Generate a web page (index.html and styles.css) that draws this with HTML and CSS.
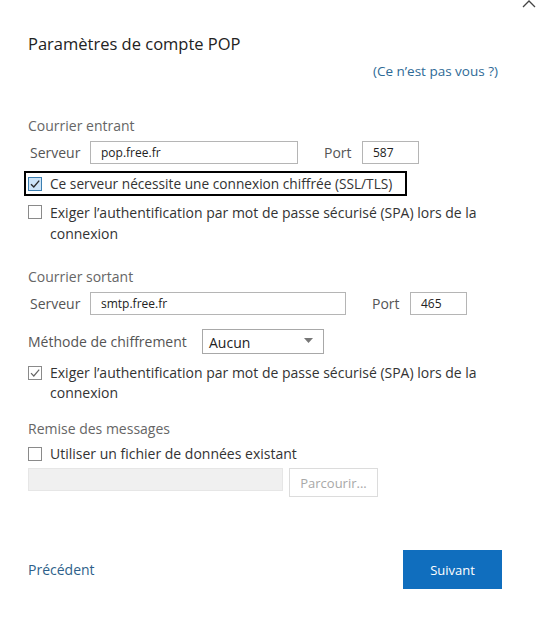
FILE: index.html
```html
<!DOCTYPE html>
<html lang="fr">
<head>
<meta charset="utf-8">
<link rel="stylesheet" href="styles.css">
</head>
<body>
<div class="dialog">
  <svg class="close" width="14" height="8" viewBox="0 0 14 8"><path d="M1 7 L7 1 L13 7" fill="none" stroke="#444" stroke-width="1.3"/></svg>
  <h1 class="title">Paramètres de compte POP</h1>
  <div class="notyou"><a>(Ce n’est pas vous ?)</a></div>

  <div class="section-label first">Courrier entrant</div>
  <div class="row server-row">
    <span class="lbl">Serveur</span>
    <span class="input in-srv1">pop.free.fr</span>
    <span class="lbl port-lbl1">Port</span>
    <span class="input in-port1">587</span>
  </div>
  <div class="focusbox">
    <span class="cb checked-focus"><svg width="12" height="12" viewBox="0 0 12 12"><path d="M2 6.2 L4.8 9 L10.2 2.6" fill="none" stroke="#2b2b2b" stroke-width="1.4"/></svg></span>
    <span class="cbtext">Ce serveur nécessite une connexion chiffrée (SSL/TLS)</span>
  </div>
  <div class="check-row spa1">
    <span class="cb"></span>
    <span class="cbtext">Exiger l’authentification par mot de passe sécurisé (SPA) lors de la connexion</span>
  </div>

  <div class="section-label out">Courrier sortant</div>
  <div class="row server-row">
    <span class="lbl">Serveur</span>
    <span class="input in-srv2">smtp.free.fr</span>
    <span class="lbl port-lbl2">Port</span>
    <span class="input in-port2">465</span>
  </div>
  <div class="row method-row">
    <span class="lbl method-lbl">Méthode de chiffrement</span>
    <span class="select">Aucun<svg class="caret" width="9" height="5" viewBox="0 0 9 5"><path d="M0 0 L9 0 L4.5 5 Z" fill="#777"/></svg></span>
  </div>
  <div class="check-row spa2">
    <span class="cb"><svg width="12" height="12" viewBox="0 0 12 12"><path d="M2 6.2 L4.8 9 L10.2 2.6" fill="none" stroke="#666" stroke-width="1.2"/></svg></span>
    <span class="cbtext">Exiger l’authentification par mot de passe sécurisé (SPA) lors de la connexion</span>
  </div>

  <div class="section-label deliv">Remise des messages</div>
  <div class="check-row single">
    <span class="cb"></span>
    <span class="cbtext">Utiliser un fichier de données existant</span>
  </div>
  <div class="row file-row">
    <span class="file-input"></span>
    <span class="browse">Parcourir...</span>
  </div>

  <div class="footer">
    <a class="prev">Précédent</a>
    <span class="next">Suivant</span>
  </div>
</div>
</body>
</html>
```
FILE: styles.css
```css
* { box-sizing: border-box; }
html, body { margin: 0; padding: 0; background: #fff; }
body {
  font-family: "Open Sans", "Noto Sans", sans-serif;
  color: #333;
  font-size: 14px;
}
.dialog {
  position: relative;
  width: 538px;
  height: 618px;
  padding: 32px 40px 0 28px;
  overflow: hidden;
}
.close { position: absolute; right: 2px; top: 0; }
.title {
  margin: 0;
  font-weight: 400;
  font-size: 16.5px;
  line-height: 24px;
  color: #222;
}
.notyou {
  margin-top: 5px;
  text-align: right;
  line-height: 20px;
  font-size: 13.5px;
}
.notyou a { color: #2e6a96; }
.section-label {
  line-height: 20px;
  color: #666;
  font-size: 14px;
}
.section-label.first { margin-top: 35px; }
.section-label.out { margin-top: 23px; }
.section-label.deliv { margin-top: 16px; }
.row { display: flex; align-items: center; }
.server-row { margin-top: 5px; height: 23px; }
.lbl { color: #555; font-size: 14px; line-height: 20px; }
.server-row .lbl:first-child { margin-left: 2px; width: 60px; }
.input {
  height: 23px;
  border: 1px solid #b5b5b5;
  padding: 0 10px;
  font-size: 12px;
  line-height: 21px;
  color: #222;
}
.in-srv1 { width: 208px; }
.port-lbl1 { margin-left: 26px; width: 38px; }
.in-port1 { width: 57px; }
.in-srv2 { width: 256px; }
.port-lbl2 { margin-left: 26px; width: 38px; }
.in-port2 { width: 57px; }
.focusbox {
  margin: 7px 0 0 -4px;
  width: 383px;
  height: 25px;
  border: 2px solid #000;
  display: flex;
  align-items: center;
  padding-left: 2px;
}
.cb {
  flex: none;
  width: 14px;
  height: 14px;
  border: 1px solid #8a8a8a;
  display: inline-flex;
  align-items: center;
  justify-content: center;
  background: #fff;
}
.cb.checked-focus { background: #cde4f7; border-color: #3c7fb1; }
.cbtext { margin-left: 8px; color: #333; }
.focusbox .cbtext { margin-left: 8px; line-height: 20px; font-size: 13.7px; }
.check-row { display: flex; align-items: flex-start; line-height: 21px; }
.check-row .cb { margin-top: 3px; }
.spa1 { margin-top: 6px; }
.spa2 { margin-top: 9px; line-height: 20px; }
.spa2 .cb { margin-top: 3px; }
.check-row .cbtext { max-width: 450px; }
.method-row { margin-top: 14px; height: 25px; }
.method-lbl { width: 174px; }
.select {
  width: 122px;
  height: 25px;
  border: 1px solid #a8a8a8;
  display: flex;
  align-items: center;
  justify-content: space-between;
  padding: 2px 10px 0 6px;
  font-size: 14px;
  color: #222;
}
.caret { margin-top: -4px; }
.single { margin-top: 5px; line-height: 20px; }
.single .cb { margin-top: 3px; }
.file-row { margin-top: 4px; align-items: flex-start; }
.file-input {
  width: 255px;
  height: 23px;
  background: #f0f0f0;
  border: 1px solid #e6e6e6;
}
.browse {
  margin-left: 6px;
  width: 89px;
  height: 29px;
  border: 1px solid #dcdcdc;
  color: #a8a8a8;
  font-size: 13px;
  display: flex;
  align-items: center;
  justify-content: center;
}
.footer {
  margin-top: 53px;
  display: flex;
  align-items: center;
  justify-content: space-between;
}
.prev { color: #2e5f8a; font-size: 14px; }
.next {
  margin-right: -4px;
  width: 99px;
  height: 39px;
  background: #106ebe;
  color: #fff;
  font-size: 13px;
  display: flex;
  align-items: center;
  justify-content: center;
}
```
